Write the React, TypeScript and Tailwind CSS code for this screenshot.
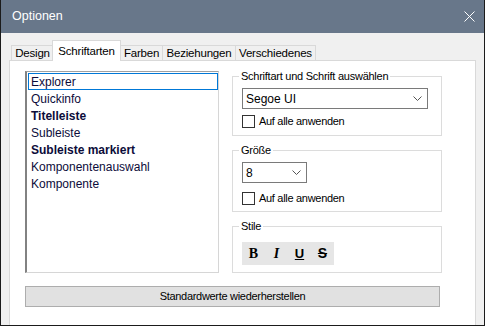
const items = [
  { label: "Explorer", bold: false },
  { label: "Quickinfo", bold: false },
  { label: "Titelleiste", bold: true },
  { label: "Subleiste", bold: false },
  { label: "Subleiste markiert", bold: true },
  { label: "Komponentenauswahl", bold: false },
  { label: "Komponente", bold: false },
]

const tabs = [
  { label: "Design", w: "w-[43px]" },
  { label: "Schriftarten", w: "w-[69px]", active: true },
  { label: "Farben", w: "w-[43px]" },
  { label: "Beziehungen", w: "w-[74px]" },
  { label: "Verschiedenes", w: "w-[81px]" },
]

function Chevron() {
  return (
    <svg width="9" height="5" viewBox="0 0 9 5" className="shrink-0">
      <path d="M0.5 0.5 L4.5 4.5 L8.5 0.5" fill="none" stroke="#555" strokeWidth="1" />
    </svg>
  )
}

function Checkbox({ label }: { label: string }) {
  return (
    <div className="flex items-center gap-[4px] h-[13px]">
      <div className="w-[13px] h-[13px] border border-[#333] bg-white" />
      <span className="text-[11px] leading-[13px] tracking-[-0.3px]">{label}</span>
    </div>
  )
}

function Group({ title, children, className }: { title: string; children: React.ReactNode; className?: string }) {
  return (
    <fieldset className={`border border-[#dcdcdc] pl-[9px] pr-[9px] ${className ?? ""}`}>
      <legend className="-ml-[3px] px-[2px] text-[11px] leading-[14px] tracking-[-0.25px]">{title}</legend>
      {children}
    </fieldset>
  )
}

export default function App() {
  return (
    <div className="w-[488px] h-[329px] bg-white font-['Liberation_Sans',Arial,sans-serif] text-black">
      <div className="w-[485px] h-[326px] border-x border-b border-[#1b1b1b] flex flex-col overflow-hidden bg-[#f0f0f0]">
        {/* Title bar */}
        <div className="h-[33px] shrink-0 bg-[#68778a] flex items-center justify-between pl-[11px] pr-[9px]">
          <span className="text-white text-[12.5px]">Optionen</span>
          <svg width="11" height="11" viewBox="0 0 11 11">
            <path d="M0.5 0.5 L10.5 10.5 M10.5 0.5 L0.5 10.5" stroke="#fff" strokeWidth="1" />
          </svg>
        </div>

        {/* Tabs */}
        <div className="flex items-end pl-[10px] pt-[8px] h-[28px] shrink-0">
          {tabs.map((t) =>
            t.active ? (
              <div
                key={t.label}
                className={`${t.w} h-[21px] -mx-px relative z-10 bg-white border-x border-t border-[#d9d9d9] text-[11.5px] tracking-[-0.2px] flex items-start justify-center pt-[2px]`}
              >
                {t.label}
              </div>
            ) : (
              <div
                key={t.label}
                className={`${t.w} h-[16px] border-l border-t border-r border-[#d9d9d9] -mr-px text-[11.5px] tracking-[-0.2px] flex items-center justify-center`}
              >
                {t.label}
              </div>
            )
          )}
        </div>

        {/* Tab panel */}
        <div className="ml-[8px] w-[467px] flex-1 -mt-px bg-white border-x border-t border-[#d9d9d9] pl-[15px] pt-[8px]">
          <div className="flex items-start gap-[13px]">
            {/* List */}
            <div className="mt-[2px] w-[194px] h-[202px] bg-white border-t border-[#a0a0a0] border-l-2 border-l-[#828282] border-r border-r-[#d6d6d6] border-b border-b-[#d6d6d6] pl-px pt-px text-[12px]">
              {items.map((it, i) => (
                <div
                  key={it.label}
                  className={`h-[17px] flex items-center pl-[2px] ${i === 0 ? "border border-[#0078d7]" : "border border-transparent"} ${it.bold ? "font-bold" : ""} text-[#0c0c3a]`}
                >
                  {it.label}
                </div>
              ))}
            </div>

            {/* Right column */}
            <div className="w-[210px] flex flex-col gap-[7px]">
              <Group title="Schriftart und Schrift auswählen" className="pt-[5px] pb-[7px]">
                <div className="w-[186px] h-[21px] border border-[#7a7a7a] bg-white flex items-center justify-between pl-[3px] pr-[5px] text-[12px]">
                  <span>Segoe UI</span>
                  <Chevron />
                </div>
                <div className="mt-[6px]">
                  <Checkbox label="Auf alle anwenden" />
                </div>
              </Group>

              <Group title="Größe" className="pt-[5px] pb-[6px]">
                <div className="w-[65px] h-[21px] border border-[#7a7a7a] bg-white flex items-center justify-between pl-[3px] pr-[5px] text-[12px]">
                  <span>8</span>
                  <Chevron />
                </div>
                <div className="mt-[9px]">
                  <Checkbox label="Auf alle anwenden" />
                </div>
              </Group>

              <Group title="Stile" className="pt-[9px] pb-[7px]">
                <div className="w-[92px] h-[23px] bg-[#e6e6e6] flex items-center">
                  <span className="w-[23px] text-center font-['Liberation_Serif',serif] font-bold text-[14px]">B</span>
                  <span className="w-[23px] text-center font-['Liberation_Serif',serif] font-bold italic text-[14px]">I</span>
                  <span className="w-[23px] text-center font-bold underline text-[13px]">U</span>
                  <span className="w-[23px] text-center font-bold line-through text-[14px]">S</span>
                </div>
              </Group>
            </div>
          </div>

          <div className="mt-[13px] w-[415px] h-[21px] bg-[#e1e1e1] border border-[#adadad] flex items-center justify-center text-[11px] tracking-[-0.3px]">
            Standardwerte wiederherstellen
          </div>
        </div>
      </div>
    </div>
  )
}
